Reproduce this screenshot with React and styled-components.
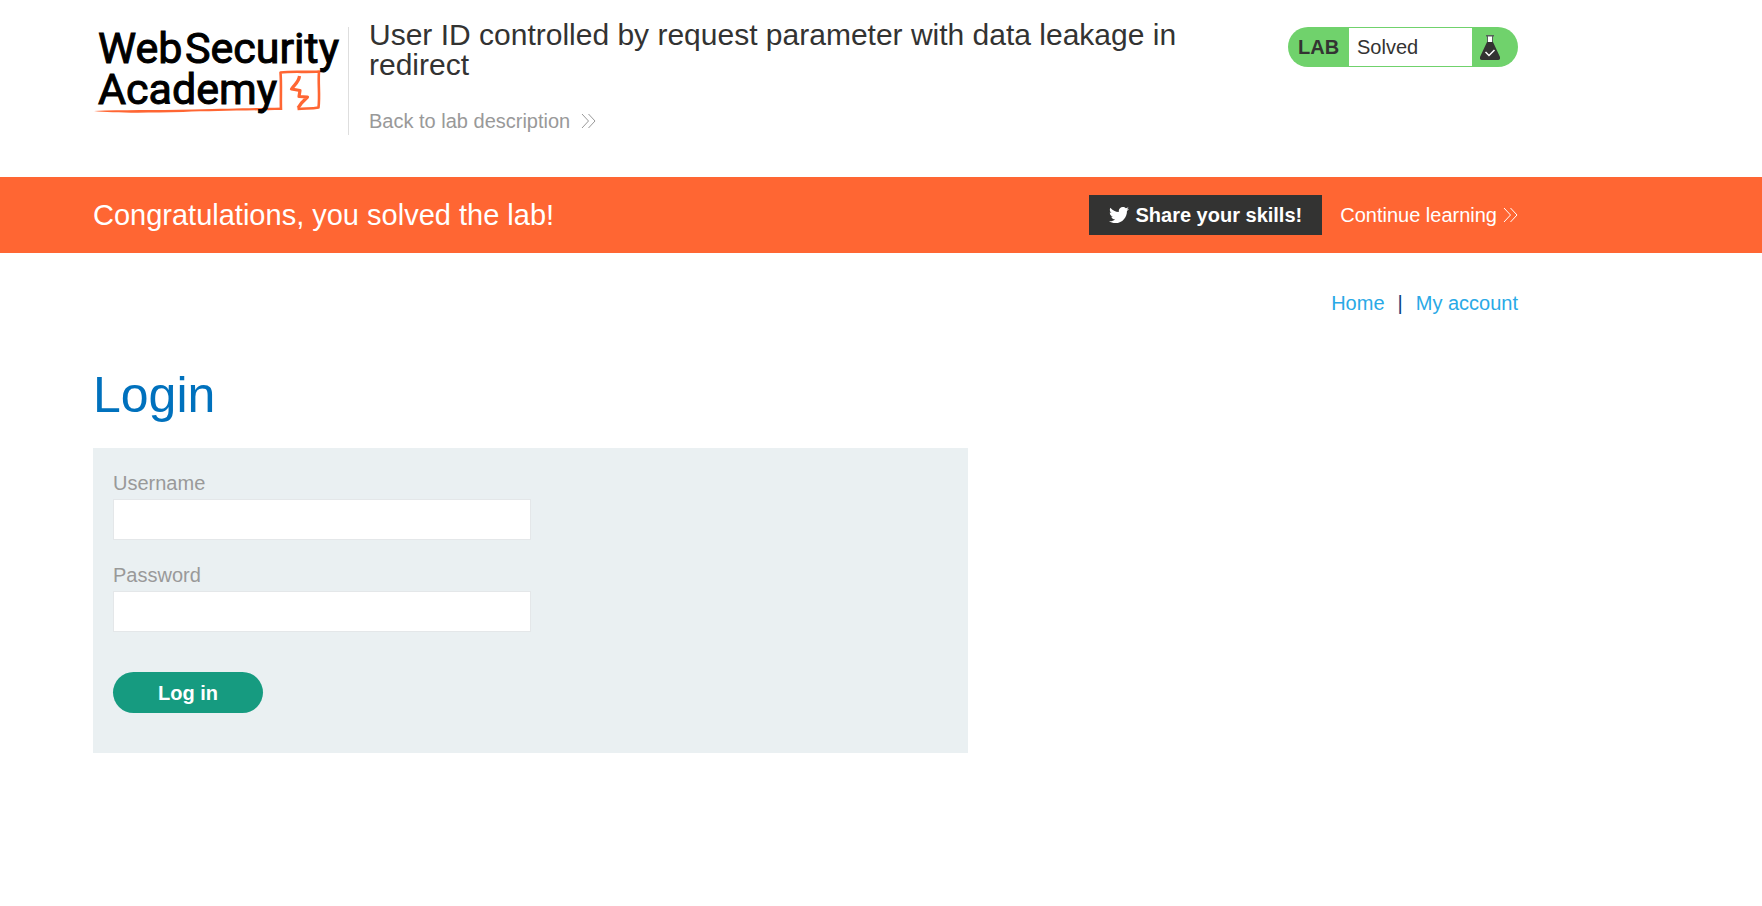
import React from "react";
import styled, { createGlobalStyle } from "styled-components";
import { FaTwitter } from "react-icons/fa";

const GlobalStyle = createGlobalStyle`
  *, *::before, *::after { box-sizing: border-box; }
  body {
    margin: 0;
    background: #fff;
    color: #333332;
    font-family: "Liberation Sans", Arial, sans-serif;
    font-size: 20px;
    line-height: 24px;
  }
  h1, h2, h3, p { margin: 0; font-weight: 400; }
  a { text-decoration: none; }
`;

const Container = styled.div`
  max-width: 1611px;
  padding: 0 93px;
`;

const Header = styled.header`
  padding: 20px 0 42px;
`;

const HeaderRow = styled(Container)`
  display: flex;
  align-items: flex-start;
`;

const LogoLink = styled.a`
  flex: none;
  display: block;
  margin-top: 7px;
  height: 108px;
  border-right: 1px solid #dedede;
`;

const LogoSvg = styled.svg`
  display: block;
  overflow: visible;
  text {
    font-family: Roboto, sans-serif;
    font-size: 43px;
    fill: #000;
    stroke: #000;
    stroke-width: 1px;
  }
`;

const TitleBlock = styled.div`
  flex: 1;
  max-width: 880px;
  padding-left: 20px;
`;

const Title = styled.h2`
  max-width: 840px;
  margin-bottom: 29px;
  font-size: 30px;
  line-height: 30px;
`;

const ArrowLink = styled.a`
  display: inline-flex;
  align-items: center;
  gap: ${(p) => p.$gap}px;
  color: ${(p) => p.$color};
`;

const Status = styled.div`
  flex: none;
  display: flex;
  width: 230px;
  height: 40px;
  margin: 7px 0 0 auto;
  padding: 1px 0;
  border-radius: 20px;
  background: #70d26c;
  line-height: 38px;
`;

const StatusTag = styled.span`
  width: 61px;
  padding-left: 10px;
  font-weight: 700;
`;

const StatusText = styled.p`
  width: 123px;
  padding-left: 8px;
  background: #fff;
`;

const StatusIcon = styled.span`
  padding: 7px 0 0 8px;
  line-height: 0;
`;

const Banner = styled.section`
  background: #ff6633;
  color: #fff;
`;

const BannerRow = styled(Container)`
  display: flex;
  align-items: center;
  min-height: 76px;
`;

const BannerText = styled.h3`
  flex: 1;
  font-size: 29px;
  line-height: 32px;
`;

const ShareButton = styled.button`
  display: flex;
  align-items: center;
  gap: 6px;
  height: 40px;
  margin-right: 18px;
  padding: 0 20px;
  border: 0;
  background: #333332;
  color: #fff;
  font: inherit;
  font-weight: 700;
  cursor: pointer;
`;

const Nav = styled.nav`
  display: flex;
  justify-content: flex-end;
  gap: 13px;
  padding-top: 38px;
  color: #0f3b7a;
`;

const NavLink = styled.a`
  color: #29a9e6;
`;

const PageTitle = styled.h1`
  margin: 50px 0 23px;
  color: #0071bd;
  font-size: 50px;
  line-height: 60px;
`;

const LoginForm = styled.form`
  max-width: 875px;
  padding: 23px 20px 40px;
  background: #eaf0f2;
`;

const Field = styled.div`
  margin-bottom: ${(p) => (p.$last ? 40 : 23)}px;
`;

const Label = styled.label`
  display: block;
  margin-bottom: 4px;
  color: #999;
`;

const TextInput = styled.input`
  display: block;
  width: 50%;
  height: 41px;
  padding: 0 10px;
  border: 1px solid #e4e7e9;
  background: #fff;
  font: inherit;
`;

const LoginButton = styled.button`
  width: 150px;
  height: 41px;
  border: 0;
  border-radius: 21px;
  background: #169b80;
  color: #fff;
  font: inherit;
  font-weight: 700;
  cursor: pointer;
`;

const Arrows = () => (
  <svg width="15" height="16" viewBox="0 0 15 16" fill="none" stroke="currentColor" strokeWidth="1" aria-hidden="true">
    <path d="M1 1 L7.5 8 L1 15 M7.5 1 L14 8 L7.5 15" />
  </svg>
);

const Logo = () => (
  <LogoSvg width="255" height="90" viewBox="0 0 255 90" role="img" aria-label="Web Security Academy">
    <path d="M1 84 C30 82.500 60 83.500 100 82.500 S160 81 189 80.500 L189 83 C150 83.500 120 84 90 85 C50 86 18 86 1 84Z" fill="#ff6633" />
    <g fill="none" stroke="#ff6633" strokeLinejoin="round">
      <path d="M188 83 C187.500 70 188.500 58 187.500 45.500 C200 44 213 45.500 226 44.500 C225 57 227 68 225.500 80.500 C218 82 212 81 204.500 82" strokeWidth="2.600" />
      <path d="M206.500 49 C206 55 201 58 198.500 62 L207 63.500 L206 69.500 L214.500 70 L208.500 76 L205 81" strokeWidth="3.200" />
    </g>
    <text x="5" y="36">Web</text>
    <text x="92" y="36">Security</text>
    <text x="5" y="77">Academy</text>
  </LogoSvg>
);

const Flask = () => (
  <svg width="20" height="25" viewBox="0 0 20 25" aria-hidden="true">
    <path d="M7.500 1 H12.500 V7 H7.500Z" fill="#fff" />
    <path d="M6 0 H14 V1.500 H6Z M7 1 H8 V7 H7Z M12 1 H13 V7 H12Z" fill="#55605a" />
    <path d="M7 7 H13 L20 22 Q20.500 25 18 25 H2 Q-.5 25 0 22Z" fill="#333332" />
    <path d="M5.500 17 L9 20.500 L14.500 15" fill="none" stroke="#fff" strokeWidth="1.500" />
  </svg>
);

export default function App() {
  return (
    <>
      <GlobalStyle />
      <Header>
        <HeaderRow>
          <LogoLink href="#academy">
            <Logo />
          </LogoLink>
          <TitleBlock>
            <Title>User ID controlled by request parameter with data leakage in redirect</Title>
            <ArrowLink href="#lab" $gap={11} $color="#999">
              Back to lab description
              <Arrows />
            </ArrowLink>
          </TitleBlock>
          <Status>
            <StatusTag>LAB</StatusTag>
            <StatusText>Solved</StatusText>
            <StatusIcon>
              <Flask />
            </StatusIcon>
          </Status>
        </HeaderRow>
      </Header>
      <Banner>
        <BannerRow>
          <BannerText>Congratulations, you solved the lab!</BannerText>
          <ShareButton type="button">
            <FaTwitter size={20} aria-hidden="true" />
            Share your skills!
          </ShareButton>
          <ArrowLink href="#learning" $gap={6} $color="#fff">
            Continue learning
            <Arrows />
          </ArrowLink>
        </BannerRow>
      </Banner>
      <Container as="main">
        <Nav>
          <NavLink href="#home">Home</NavLink>
          <span>|</span>
          <NavLink href="#account">My account</NavLink>
        </Nav>
        <PageTitle>Login</PageTitle>
        <LoginForm onSubmit={(e) => e.preventDefault()}>
          <Field>
            <Label htmlFor="username">Username</Label>
            <TextInput id="username" name="username" type="text" />
          </Field>
          <Field $last>
            <Label htmlFor="password">Password</Label>
            <TextInput id="password" name="password" type="password" />
          </Field>
          <LoginButton type="submit">Log in</LoginButton>
        </LoginForm>
      </Container>
    </>
  );
}
